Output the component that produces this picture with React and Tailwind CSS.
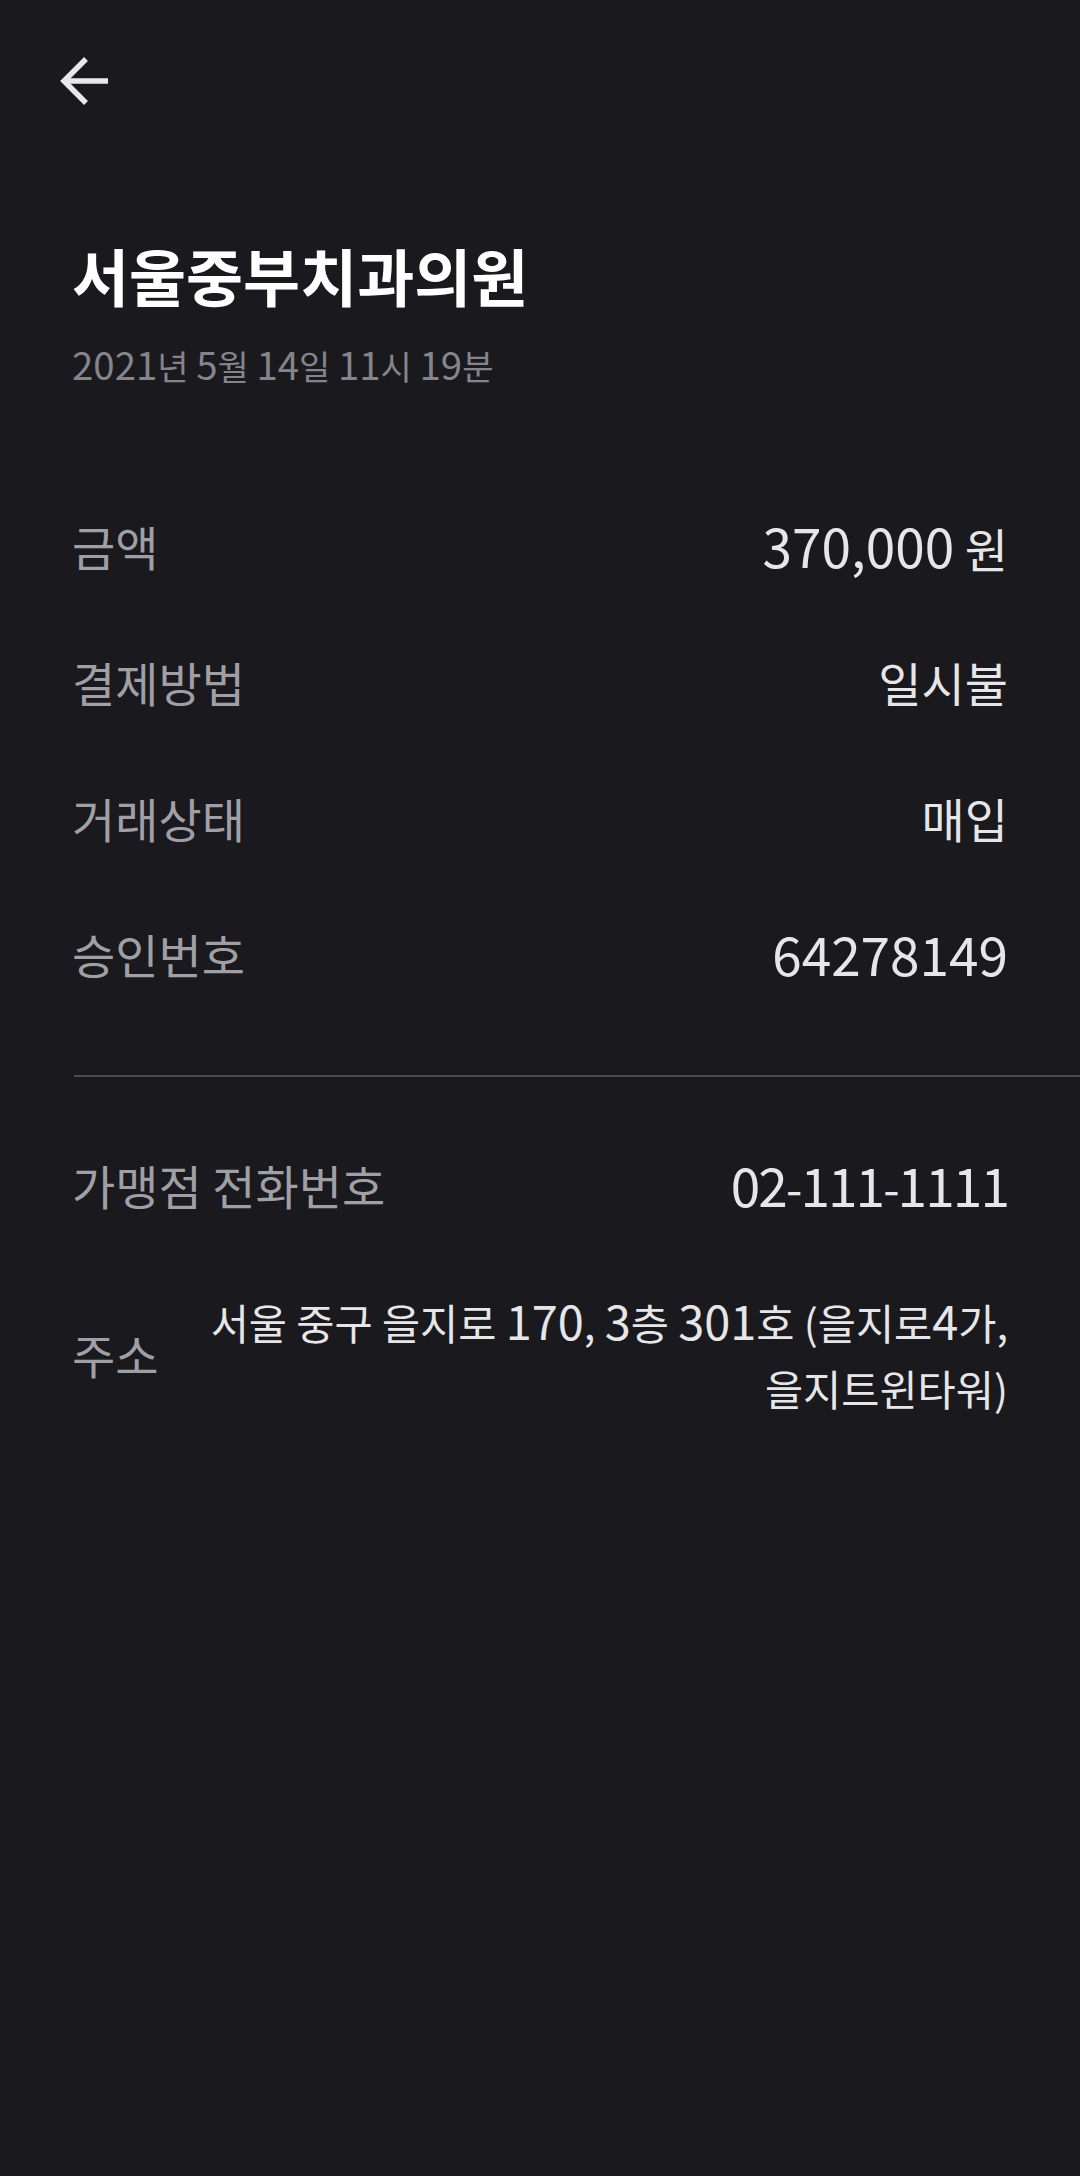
import React from 'react';

// digits in the reference are taller than Noto's, so number runs get a bump
const Txt = ({ text }) =>
    text.split(/(\d[\d,]*\d|\d)/).map((part, i) =>
        /\d/.test(part) ? (
            <span key={i} className="text-[1.13em]">{part}</span>
        ) : (
            <React.Fragment key={i}>{part}</React.Fragment>
        )
    );

const rows = [
    { label: '금액', value: '370,000 원' },
    { label: '결제방법', value: '일시불' },
    { label: '거래상태', value: '매입' },
    { label: '승인번호', value: '64278149' },
];

const Row = ({ label, value, tight = false }) => (
    <div className="flex justify-between items-center h-[136px] pl-[72px] pr-[72px]">
        <span className="text-[47px] leading-[60px] text-[#a09fa5]">{label}</span>
        <span className={tight ? 'text-[47px] leading-[60px] text-[#e6e6e8] tracking-[-0.04em]' : 'text-[47px] leading-[60px] text-[#e6e6e8]'}>
            <Txt text={value} />
        </span>
    </div>
);

export default function App() {
    return (
        <div
            className="min-h-[2176px] w-full bg-[#1a191e]"
            style={{ fontFamily: '"Noto Sans CJK KR", "Noto Sans", sans-serif' }}
        >
            <div className="pt-[57px] pl-[60px]">
                <button type="button" className="block w-[48px] h-[48px]" aria-label="뒤로">
                    <svg width="48" height="48" viewBox="0 0 48 48" fill="none">
                        <path d="M4 24H48" stroke="#e8e8ea" strokeWidth="5.5" />
                        <path d="M26 2L4 24L26 46" stroke="#e8e8ea" strokeWidth="5.5" strokeLinejoin="miter" />
                    </svg>
                </button>
            </div>

            <div className="pl-[72px] pr-[72px]">
                <h1 className="mt-[136px] text-[62px] leading-[68px] font-bold text-white">서울중부치과의원</h1>
                <p className="mt-[32px] text-[34px] leading-[44px] text-[#85848b]">
                    <Txt text="2021년 5월 14일 11시 19분" />
                </p>
            </div>

            <div className="mt-[90px]">
                {rows.map((r) => (
                    <Row key={r.label} label={r.label} value={r.value} />
                ))}
            </div>

            <div className="mt-[53px] ml-[74px] h-[2px] bg-[#4b4a52]" />

            <div className="mt-[40px]">
                <Row label="가맹점 전화번호" value="02-111-1111" tight />
            </div>

            <div className="mt-[34px] flex items-center justify-between gap-[30px] pl-[72px] pr-[72px]">
                <span className="shrink-0 text-[47px] leading-[60px] text-[#a09fa5]">주소</span>
                <p className="text-right text-[41.5px] leading-[66px] text-[#e6e6e8]">
                    <Txt text="서울 중구 을지로 170, 3층 301호 (을지로4가," />
                    <br />
                    을지트윈타워)
                </p>
            </div>
        </div>
    );
}
